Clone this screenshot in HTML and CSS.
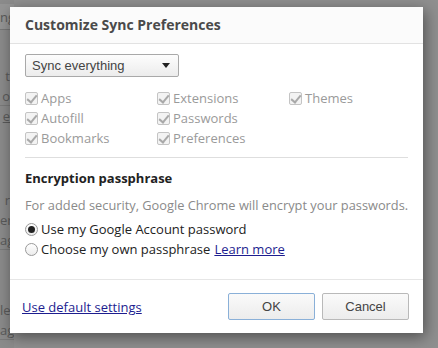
FILE: index.html
```html
<!DOCTYPE html>
<html>
<head>
    <link rel="stylesheet" href="styles.css">
</head>
<body>
    <!-- dimmed settings page behind the dialog -->
    <div class="backdrop">
        <div class="bg-row bg-box">ng</div>
        <div class="bg-row bg-gap1">t</div>
        <div class="bg-row bg-line">o</div>
        <div class="bg-row bg-link">e</div>
        <div class="bg-row bg-gap2">r</div>
        <div class="bg-row">er</div>
        <div class="bg-row bg-line">ag</div>
        <div class="bg-row bg-gap3">le</div>
        <div class="bg-row bg-line">ag</div>
    </div>

    <div class="dialog">
        <div class="dialog-header">Customize Sync Preferences</div>
        <div class="dialog-body">
            <div class="select">
                <span>Sync everything</span>
                <span class="caret"></span>
            </div>

            <div class="types">
                <label class="type"><span class="box"></span>Apps</label>
                <label class="type"><span class="box"></span>Extensions</label>
                <label class="type"><span class="box"></span>Themes</label>
                <label class="type"><span class="box"></span>Autofill</label>
                <label class="type"><span class="box"></span>Passwords</label>
                <span></span>
                <label class="type"><span class="box"></span>Bookmarks</label>
                <label class="type"><span class="box"></span>Preferences</label>
            </div>

            <div class="section">
                <h3>Encryption passphrase</h3>
                <p class="note">For added security, Google Chrome will encrypt your passwords.</p>
                <label class="radio"><span class="dot on"></span>Use my Google Account password</label>
                <label class="radio"><span class="dot"></span>Choose my own passphrase <a href="#">Learn more</a></label>
            </div>
        </div>
        <div class="dialog-footer">
            <a href="#" class="defaults">Use default settings</a>
            <div class="buttons">
                <button class="btn btn-focus">OK</button>
                <button class="btn">Cancel</button>
            </div>
        </div>
    </div>
</body>
</html>
```

FILE: styles.css
```css
* {
    margin: 0;
    box-sizing: border-box;
}
body {
    width: 438px;
    height: 348px;
    overflow: hidden;
    background-color: #8f8f8f;
    font-family: "Open Sans", "Liberation Sans", sans-serif;
    position: relative;
}
.backdrop {
    width: 14px;
    padding-top: 4px;
    overflow: hidden;
    background-color: #8b8b8b;
    height: 348px;
}
.bg-row {
    font-size: 13px;
    color: #5a5a5a;
    white-space: nowrap;
    text-align: right;
    height: 20px;
    line-height: 20px;
    padding-right: 4px;
}
.bg-box {
    height: 26px;
    line-height: 26px;
    background-color: #959595;
    border-bottom: 1px solid #777;
}
.bg-gap1 { margin-top: 36px; }
.bg-gap2 { margin-top: 64px; }
.bg-gap3 { margin-top: 50px; }
.bg-line { border-bottom: 1px solid #7a7a7a; }
.bg-link { text-decoration: underline; }

.dialog {
    position: absolute;
    left: 10px;
    top: 7px;
    width: 413px;
    height: 326px;
    background-color: #fff;
    box-shadow: 2px 4px 14px rgba(0, 0, 0, 0.45);
    display: flex;
    flex-direction: column;
}
.dialog-header {
    height: 37px;
    padding: 8px 15px 0;
    font-size: 14px;
    font-weight: bold;
    color: #4a4a4a;
    background-color: #fbfbfb;
    border-bottom: 1px solid #e2e2e2;
}
.dialog-body {
    padding: 10px 15px 0;
    flex: 1;
}
.select {
    width: 154px;
    height: 23px;
    border: 1px solid #a9a9a9;
    border-radius: 2px;
    background: linear-gradient(#fdfdfd, #ececec);
    display: flex;
    align-items: center;
    justify-content: space-between;
    padding: 0 8px 0 6px;
    font-family: "Liberation Sans", Arial, sans-serif;
    font-size: 13px;
    color: #444;
}
.caret {
    width: 0;
    height: 0;
    border-left: 4px solid transparent;
    border-right: 4px solid transparent;
    border-top: 5px solid #222;
}
.types {
    display: grid;
    grid-template-columns: 132px 132px 1fr;
    margin-top: 11px;
    padding-bottom: 9px;
    border-bottom: 1px solid #dedede;
}
.type {
    display: flex;
    align-items: center;
    height: 20px;
    font-size: 13px;
    color: #9a9a9a;
}
.box {
    width: 13px;
    height: 13px;
    border: 1px solid #c4c4c4;
    border-radius: 2px;
    background: #f3f3f3;
    margin-right: 3px;
    position: relative;
}
.box::after {
    content: "";
    position: absolute;
    left: 3px;
    top: 0px;
    width: 4px;
    height: 8px;
    border-right: 2px solid #a9a9a9;
    border-bottom: 2px solid #a9a9a9;
    transform: rotate(40deg);
}
.section {
    padding-top: 10px;
}
.section h3 {
    font-size: 13px;
    font-weight: bold;
    color: #222;
    line-height: 20px;
}
.note {
    font-size: 12.8px;
    white-space: nowrap;
    color: #8a8a8a;
    margin-top: 8px;
    line-height: 18px;
}
.radio {
    display: flex;
    align-items: center;
    height: 20px;
    font-size: 13px;
    color: #222;
    margin-top: 5px;
}
.radio + .radio {
    margin-top: 0;
}
.dot {
    width: 13px;
    height: 13px;
    border: 1px solid #9a9a9a;
    border-radius: 50%;
    background: linear-gradient(#fff, #ececec);
    margin-right: 3px;
    position: relative;
}
.dot.on::after {
    content: "";
    position: absolute;
    left: 2px;
    top: 2px;
    width: 7px;
    height: 7px;
    border-radius: 50%;
    background-color: #222;
}
.radio a {
    color: #1d1d8f;
    margin-left: 4px;
}
.dialog-footer {
    height: 54px;
    border-top: 1px solid #e6e6e6;
    display: flex;
    align-items: center;
    justify-content: space-between;
    padding: 0 14px 0 12px;
}
.defaults {
    font-size: 13px;
    color: #1d1d8f;
}
.buttons {
    display: flex;
    gap: 7px;
}
.btn {
    width: 87px;
    height: 27px;
    border: 1px solid #b9b9b9;
    border-radius: 2px;
    background: linear-gradient(#fafafa, #ececec);
    font-family: "Liberation Sans", Arial, sans-serif;
    font-size: 13px;
    color: #444;
}
.btn-focus {
    border-color: #8ab0d8;
}
```
